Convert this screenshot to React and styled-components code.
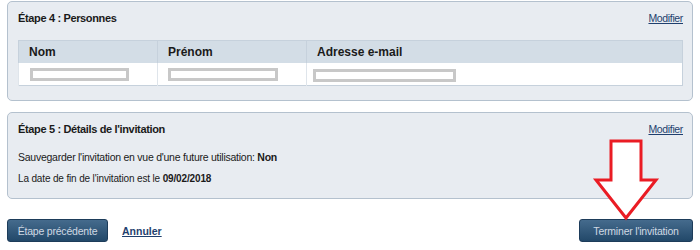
import React from "react";
import styled, { createGlobalStyle } from "styled-components";

const Global = createGlobalStyle`
  html, body { margin: 0; padding: 0; background: #ffffff; }
  body { font-family: "Liberation Sans", Arial, sans-serif; color: #222; }
`;

const Page = styled.div`
  position: relative;
  width: 700px;
  height: 250px;
  box-sizing: border-box;
  padding: 1px 7px 0 7px;
  display: flex;
  flex-direction: column;
`;

const Panel = styled.section`
  box-sizing: border-box;
  height: ${(p) => p.$h}px;
  margin-top: ${(p) => p.$mt || 0}px;
  background: #e8ecf1;
  border: 1px solid #b4c1ce;
  border-radius: 5px;
  padding: 9px 9px 0 10px;
  display: flex;
  flex-direction: column;
`;

const PanelHead = styled.div`
  display: flex;
  justify-content: space-between;
  align-items: center;
  height: 14px;
`;

const Title = styled.h2`
  margin: 0;
  font-size: 11px;
  letter-spacing: -0.35px;
  font-weight: bold;
  color: #1a1a1a;
`;

const Link = styled.a`
  font-size: ${(p) => (p.$bold ? "10.5px" : "10.5px")};
  letter-spacing: ${(p) => (p.$bold ? "0" : "-0.35px")};
  color: #1f3f6e;
  text-decoration: underline;
  font-weight: ${(p) => (p.$bold ? "bold" : "normal")};
  cursor: pointer;
`;

const Table = styled.table`
  margin-top: 15px;
  width: 665px;
  border-collapse: collapse;
  background: #ffffff;
  border: 1px solid #c6d1dc;
`;

const Th = styled.th`
  height: 22px;
  padding: 0 0 0 10px;
  text-align: left;
  font-size: 12px;
  font-weight: bold;
  color: #1a1a1a;
  background: #d3dde6;
  border-left: 1px solid #c6d1dc;
  width: ${(p) => p.$w || "auto"};
`;

const Td = styled.td`
  height: 22px;
  padding: 0 0 0 ${(p) => p.$pl}px;
  border-left: 1px solid #dfe5eb;
  vertical-align: middle;
`;

const Redact = styled.div`
  box-sizing: border-box;
  width: ${(p) => p.$w}px;
  height: 13px;
  margin-top: ${(p) => p.$mt || 0}px;
  border: 3px solid #c8c8c8;
  background: #fff;
`;

const Line = styled.p`
  margin: ${(p) => p.$mt}px 0 0 0;
  font-size: ${(p) => p.$fs}px;
  letter-spacing: ${(p) => p.$ls}px;
  color: #1a1a1a;
  line-height: 14px;
  b { font-weight: bold; }
`;

const Actions = styled.div`
  margin-top: 20px;
  display: flex;
  align-items: center;
  gap: 14px;
`;

const Button = styled.button`
  box-sizing: border-box;
  height: 23px;
  width: ${(p) => p.$w}px;
  padding: 0;
  border: 1px solid #1d3c5a;
  border-radius: 3px;
  background: linear-gradient(#456b8d, #224869);
  color: #cfd9e3;
  font-family: "Liberation Sans", Arial, sans-serif;
  font-size: 10.5px;
  letter-spacing: -0.2px;
  cursor: pointer;
  margin-left: ${(p) => (p.$right ? "auto" : "0")};
`;

const Arrow = styled.svg`
  position: absolute;
  left: 592px;
  top: 139px;
  pointer-events: none;
`;

export default function App() {
  return (
    <>
      <Global />
      <Page>
        <Panel $h={100}>
          <PanelHead>
            <Title>Étape 4 : Personnes</Title>
            <Link>Modifier</Link>
          </PanelHead>
          <Table>
            <thead>
              <tr>
                <Th $w="128px">Nom</Th>
                <Th $w="138px">Prénom</Th>
                <Th>Adresse e-mail</Th>
              </tr>
            </thead>
            <tbody>
              <tr>
                <Td $pl={11}><Redact $w={99} $mt={1} /></Td>
                <Td $pl={10}><Redact $w={110} /></Td>
                <Td $pl={6}><Redact $w={143} $mt={2} /></Td>
              </tr>
            </tbody>
          </Table>
        </Panel>
        <Panel $h={87} $mt={11}>
          <PanelHead>
            <Title>Étape 5 : Détails de l'invitation</Title>
            <Link>Modifier</Link>
          </PanelHead>
          <Line $mt={14} $fs={10.5} $ls={-0.25}>
            Sauvegarder l'invitation en vue d'une future utilisation: <b>Non</b>
          </Line>
          <Line $mt={8} $fs={10} $ls={-0.15}>
            La date de fin de l'invitation est le <b>09/02/2018</b>
          </Line>
        </Panel>
        <Actions>
          <Button $w={101}>Étape précédente</Button>
          <Link $bold>Annuler</Link>
          <Button $w={114} $right>Terminer l'invitation</Button>
        </Actions>
        <Arrow width="68" height="84" viewBox="0 0 68 84">
          <path
            d="M19 2 H49 V41 H64 L34 79 L4 41 H19 Z"
            fill="#ffffff"
            stroke="#ea1c24"
            strokeWidth="3"
            strokeLinejoin="miter"
          />
        </Arrow>
      </Page>
    </>
  );
}
